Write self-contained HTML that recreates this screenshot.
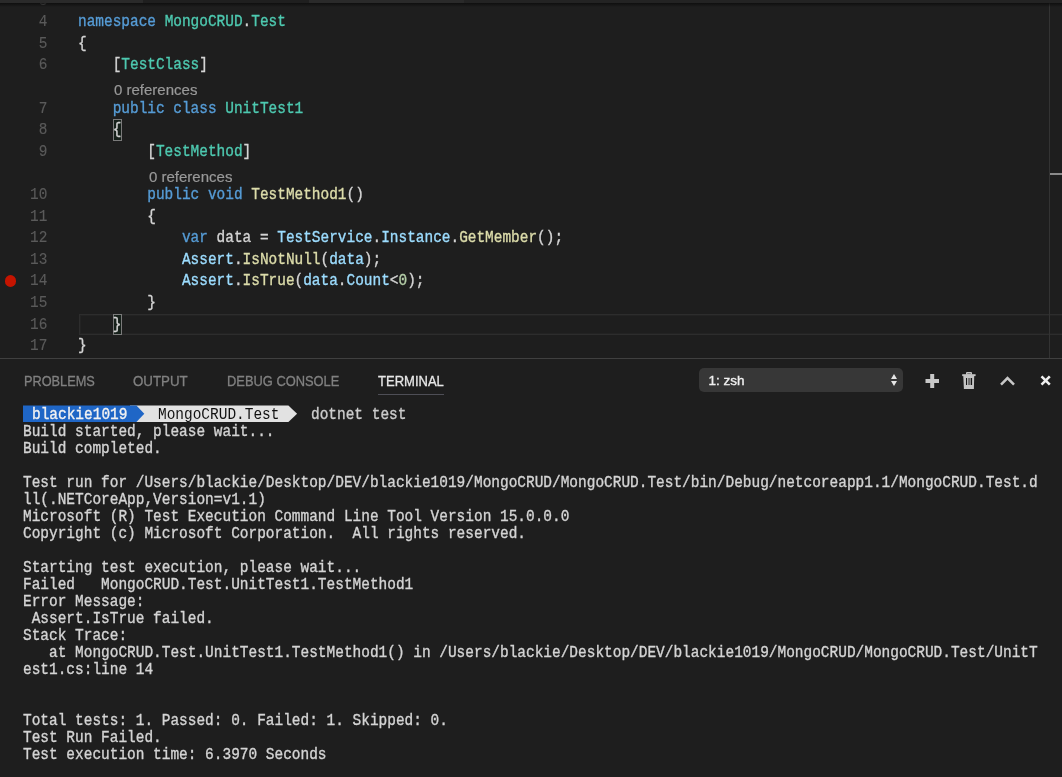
<!DOCTYPE html>
<html><head><meta charset="utf-8">
<style>
html,body{margin:0;padding:0;width:1062px;height:777px;overflow:hidden;background:#1e1e1e;}
body{position:relative;font-family:"Liberation Mono",monospace;}
.ed{position:absolute;left:0;top:0;width:1062px;height:358px;background:#1e1e1e;overflow:hidden;}
.m{position:absolute;white-space:pre;font-size:16.0px;line-height:19.20px;color:#d4d4d4;transform-origin:0 0;-webkit-text-stroke:0.35px currentColor;}
.ln{position:absolute;left:0;width:47.3px;text-align:right;color:#5a5a5a;font-size:16.0px;line-height:19.20px;white-space:pre;transform-origin:100% 0;transform:scaleX(0.9);-webkit-text-stroke:0.15px currentColor;}
.lens{position:absolute;font-family:"Liberation Sans",sans-serif;font-size:15px;color:#999;white-space:pre;-webkit-text-stroke:0.2px currentColor;}
.k{color:#569cd6}.t{color:#4ec9b0}.f{color:#dcdcaa}.v{color:#9cdcfe}.n{color:#b5cea8}
.tab{position:absolute;top:373.0px;font-family:"Liberation Sans",sans-serif;font-size:14px;color:#808080;white-space:pre;transform-origin:0 0;-webkit-text-stroke:0.3px currentColor;}
</style></head><body>
<div class="ed"><div style="position:absolute;left:0;top:0;width:1062px;height:358px;will-change:transform">
<div style="position:absolute;left:79px;top:313.80px;width:1000px;height:20.8px;border:1px solid #2d2d2d;box-shadow:inset 0 0 0 1px #232323;box-sizing:border-box;"></div>
<div style="position:absolute;left:113.14px;top:119.40px;width:9px;height:21.2px;border:1px solid #7a7a7a;box-sizing:border-box;background:#16201a;"></div>
<div style="position:absolute;left:113.14px;top:313.80px;width:9px;height:21.2px;border:1px solid #7a7a7a;box-sizing:border-box;background:#16201a;"></div>
<div class="ln" style="top:-8.50px">3</div>
<div class="ln" style="top:13.10px">4</div>
<div class="m" style="left:78.20px;top:13.10px;transform:scaleX(0.90208);"><span class="k">namespace</span> <span class="t">MongoCRUD</span>.<span class="t">Test</span></div>
<div class="ln" style="top:34.70px">5</div>
<div class="m" style="left:78.20px;top:34.70px;transform:scaleX(0.90208);">{</div>
<div class="ln" style="top:56.30px">6</div>
<div class="m" style="left:78.20px;top:56.30px;transform:scaleX(0.90208);">    [<span class="t">TestClass</span>]</div>
<div class="ln" style="top:99.50px">7</div>
<div class="m" style="left:78.20px;top:99.50px;transform:scaleX(0.90208);">    <span class="k">public</span> <span class="k">class</span> <span class="t">UnitTest1</span></div>
<div class="ln" style="top:121.10px">8</div>
<div class="m" style="left:78.20px;top:121.10px;transform:scaleX(0.90208);">    {</div>
<div class="ln" style="top:142.70px">9</div>
<div class="m" style="left:78.20px;top:142.70px;transform:scaleX(0.90208);">        [<span class="t">TestMethod</span>]</div>
<div class="ln" style="top:185.90px">10</div>
<div class="m" style="left:78.20px;top:185.90px;transform:scaleX(0.90208);">        <span class="k">public</span> <span class="k">void</span> <span class="f">TestMethod1</span>()</div>
<div class="ln" style="top:207.50px">11</div>
<div class="m" style="left:78.20px;top:207.50px;transform:scaleX(0.90208);">        {</div>
<div class="ln" style="top:229.10px">12</div>
<div class="m" style="left:78.20px;top:229.10px;transform:scaleX(0.90208);">            <span class="k">var</span> data = <span class="v">TestService</span>.<span class="v">Instance</span>.<span class="f">GetMember</span>();</div>
<div class="ln" style="top:250.70px">13</div>
<div class="m" style="left:78.20px;top:250.70px;transform:scaleX(0.90208);">            <span class="v">Assert</span>.<span class="f">IsNotNull</span>(<span class="v">data</span>);</div>
<div class="ln" style="top:272.30px">14</div>
<div class="m" style="left:78.20px;top:272.30px;transform:scaleX(0.90208);">            <span class="v">Assert</span>.<span class="f">IsTrue</span>(<span class="v">data</span>.<span class="v">Count</span>&lt;<span class="n">0</span>);</div>
<div class="ln" style="top:293.90px">15</div>
<div class="m" style="left:78.20px;top:293.90px;transform:scaleX(0.90208);">        }</div>
<div class="ln" style="top:315.50px">16</div>
<div class="m" style="left:78.20px;top:315.50px;transform:scaleX(0.90208);">    }</div>
<div class="ln" style="top:337.10px">17</div>
<div class="m" style="left:78.20px;top:337.10px;transform:scaleX(0.90208);">}</div>
<div class="lens" style="left:114px;top:81.3px">0 references</div>
<div class="lens" style="left:149px;top:167.70px">0 references</div>
</div>
<div style="position:absolute;left:4.7px;top:275.3px;width:11.8px;height:12px;border-radius:50%;background:#c51400;"></div>
<div style="position:absolute;left:1049px;top:0;width:1px;height:358px;background:#333"></div>
<div style="position:absolute;left:1050px;top:173px;width:12px;height:2px;background:#8a8a8a"></div>
<div style="position:absolute;left:0;top:0;width:1062px;height:3px;background:#232323"></div>
<div style="position:absolute;left:0;top:0;width:143.3px;height:3px;background:#2a2a2a"></div>
<div style="position:absolute;left:143.3px;top:0;width:165.7px;height:3px;background:#1f1f1f"></div>
<div style="position:absolute;left:309px;top:0;width:154.8px;height:3px;background:#2a2a2a"></div>
<div style="position:absolute;left:0;top:3px;width:1062px;height:4px;background:linear-gradient(rgba(10,10,10,0.75),rgba(30,30,30,0))"></div>
</div>
<div style="position:absolute;left:0;top:0;width:1062px;height:777px;will-change:transform">
<div style="position:absolute;left:0;top:358px;width:1062px;height:1px;background:#404040"></div>
<div class="tab" style="left:24px;color:#808080;transform:scaleX(0.91)">PROBLEMS</div>
<div class="tab" style="left:133px;color:#808080;transform:scaleX(0.95)">OUTPUT</div>
<div class="tab" style="left:226.5px;color:#808080;transform:scaleX(0.92)">DEBUG CONSOLE</div>
<div class="tab" style="left:378px;color:#e7e7e7;transform:scaleX(0.93)">TERMINAL</div>
<div style="position:absolute;left:378px;top:394px;width:66px;height:1px;background:#4e4e56"></div>
<div style="position:absolute;left:699px;top:368px;width:204px;height:24px;border-radius:5px;background:#373737"></div>
<div class="tab" style="left:708.5px;top:372.8px;font-size:13.5px;color:#f0f0f0;-webkit-text-stroke:0.35px currentColor">1: zsh</div>
<svg style="position:absolute;left:0;top:0" width="1062" height="777"><polygon points="891,379 897,379 894,374" fill="#e6e6e6"/><polygon points="891,381 897,381 894,386" fill="#e6e6e6"/><rect x="925.5" y="379" width="13.5" height="4" fill="#c8c8c8"/><rect x="930.2" y="374" width="4" height="14" fill="#c8c8c8"/><rect x="966" y="372" width="6" height="3" rx="1" fill="#c4c4c4"/><rect x="967.3" y="373.2" width="3.4" height="1.2" fill="#6a6a6a"/><rect x="962.2" y="374.2" width="13.4" height="1.9" fill="#c4c4c4"/><polygon points="963.3,376 974.2,376 973.9,389 963.9,389" fill="#c4c4c4"/><rect x="966" y="378" width="1.1" height="7" fill="#151515"/><rect x="968.1" y="378" width="2.6" height="7" fill="#6e6e6e"/><rect x="971" y="378" width="1.1" height="7" fill="#151515"/><polyline points="1001,384.6 1007.5,378 1014,384.6" fill="none" stroke="#c8c8c8" stroke-width="2.5"/><path d="M1041.5,376.4 L1049.8,384.6 M1049.8,376.4 L1041.5,384.6" stroke="#f0f0f0" stroke-width="2.6"/></svg>
</div>
<div style="position:absolute;left:0;top:0;width:1062px;height:777px;will-change:transform">
<div class="m" style="left:23.10px;top:423.00px;transform:scaleX(0.90323);">Build started, please wait...</div>
<div class="m" style="left:23.10px;top:440.00px;transform:scaleX(0.90323);">Build completed.</div>
<div class="m" style="left:23.10px;top:474.00px;transform:scaleX(0.90323);">Test run for /Users/blackie/Desktop/DEV/blackie1019/MongoCRUD/MongoCRUD.Test/bin/Debug/netcoreapp1.1/MongoCRUD.Test.d</div>
<div class="m" style="left:23.10px;top:491.00px;transform:scaleX(0.90323);">ll(.NETCoreApp,Version=v1.1)</div>
<div class="m" style="left:23.10px;top:508.00px;transform:scaleX(0.90323);">Microsoft (R) Test Execution Command Line Tool Version 15.0.0.0</div>
<div class="m" style="left:23.10px;top:525.00px;transform:scaleX(0.90323);">Copyright (c) Microsoft Corporation.  All rights reserved.</div>
<div class="m" style="left:23.10px;top:559.00px;transform:scaleX(0.90323);">Starting test execution, please wait...</div>
<div class="m" style="left:23.10px;top:576.00px;transform:scaleX(0.90323);">Failed   MongoCRUD.Test.UnitTest1.TestMethod1</div>
<div class="m" style="left:23.10px;top:593.00px;transform:scaleX(0.90323);">Error Message:</div>
<div class="m" style="left:23.10px;top:610.00px;transform:scaleX(0.90323);"> Assert.IsTrue failed.</div>
<div class="m" style="left:23.10px;top:627.00px;transform:scaleX(0.90323);">Stack Trace:</div>
<div class="m" style="left:23.10px;top:644.00px;transform:scaleX(0.90323);">   at MongoCRUD.Test.UnitTest1.TestMethod1() in /Users/blackie/Desktop/DEV/blackie1019/MongoCRUD/MongoCRUD.Test/UnitT</div>
<div class="m" style="left:23.10px;top:661.00px;transform:scaleX(0.90323);">est1.cs:line 14</div>
<div class="m" style="left:23.10px;top:712.00px;transform:scaleX(0.90323);">Total tests: 1. Passed: 0. Failed: 1. Skipped: 0.</div>
<div class="m" style="left:23.10px;top:729.00px;transform:scaleX(0.90323);">Test Run Failed.</div>
<div class="m" style="left:23.10px;top:746.00px;transform:scaleX(0.90323);">Test execution time: 6.3970 Seconds</div>
<svg style="position:absolute;left:0;top:0" width="1062" height="777"><polygon points="130,405.5 288.4,405.5 297.1,413.75 288.4,422 130,422" fill="#e2e2e2"/><polygon points="23,405.5 136.4,405.5 144.3,413.75 136.4,422 23,422" fill="#1f66c6"/></svg>
<div class="m" style="left:31.77px;top:406.00px;transform:scaleX(0.90323);color:#f2f2f2;">blackie1019</div>
<div class="m" style="left:157.80px;top:406.00px;transform:scaleX(0.90323);color:#111111;-webkit-text-stroke:0;">MongoCRUD.Test</div>
<div class="m" style="left:311.00px;top:406.00px;transform:scaleX(0.90323);color:#cccccc;">dotnet test</div>
</div>
</body></html>
